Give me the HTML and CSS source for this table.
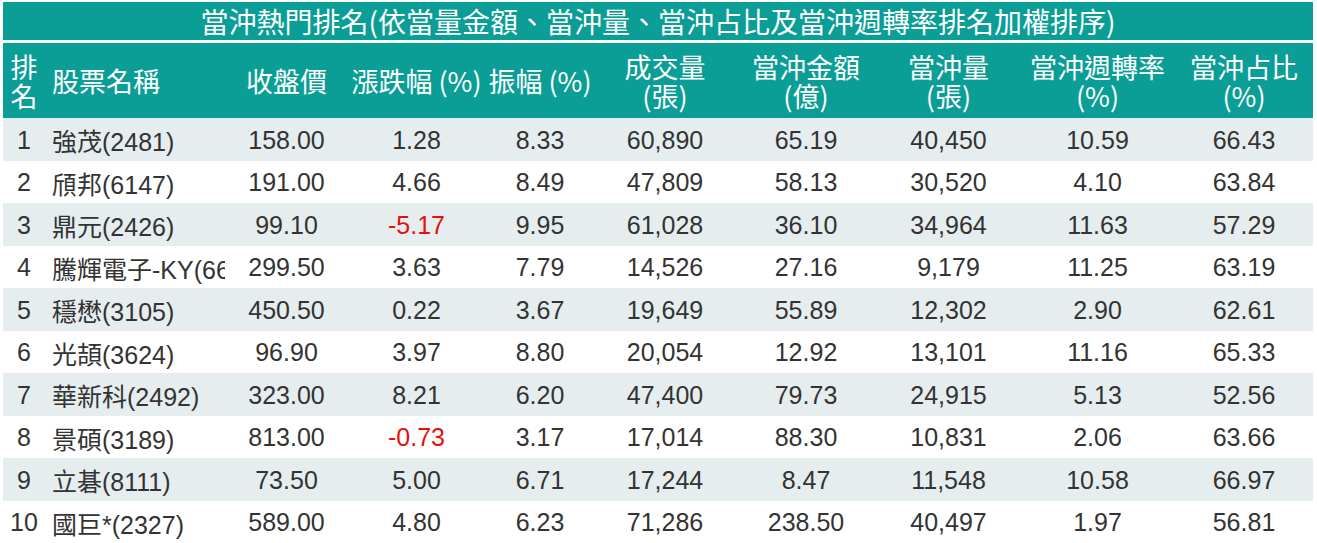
FILE: index.html
```html
<!DOCTYPE html>
<html lang="zh-Hant">
<head>
<meta charset="utf-8">
<title>當沖熱門排名</title>
<link rel="stylesheet" href="styles.css">
</head>
<body>
<div class="board">
  <div class="title">當沖熱門排名(依當量金額、當沖量、當沖占比及當沖週轉率排名加權排序)</div>
  <table class="rank">
    <colgroup>
      <col class="c-rank"><col class="c-name"><col class="c-close"><col class="c-chg"><col class="c-amp"><col class="c-vol"><col class="c-amt"><col class="c-dvol"><col class="c-turn"><col class="c-ratio">
    </colgroup>
    <thead>
      <tr>
        <th>排<br>名</th>
        <th class="left">股票名稱</th>
        <th>收盤價</th>
        <th>漲跌幅 (%)</th>
        <th>振幅 (%)</th>
        <th>成交量<br>(張)</th>
        <th>當沖金額<br>(億)</th>
        <th>當沖量<br>(張)</th>
        <th>當沖週轉率<br>(%)</th>
        <th>當沖占比<br>(%)</th>
      </tr>
    </thead>
    <tbody>
      <tr><td>1</td><td class="left">強茂(2481)</td><td>158.00</td><td>1.28</td><td>8.33</td><td>60,890</td><td>65.19</td><td>40,450</td><td>10.59</td><td>66.43</td></tr>
      <tr><td>2</td><td class="left">頎邦(6147)</td><td>191.00</td><td>4.66</td><td>8.49</td><td>47,809</td><td>58.13</td><td>30,520</td><td>4.10</td><td>63.84</td></tr>
      <tr><td>3</td><td class="left">鼎元(2426)</td><td>99.10</td><td class="neg">-5.17</td><td>9.95</td><td>61,028</td><td>36.10</td><td>34,964</td><td>11.63</td><td>57.29</td></tr>
      <tr><td>4</td><td class="left"><div class="clip">騰輝電子-KY(6672)</div></td><td>299.50</td><td>3.63</td><td>7.79</td><td>14,526</td><td>27.16</td><td>9,179</td><td>11.25</td><td>63.19</td></tr>
      <tr><td>5</td><td class="left">穩懋(3105)</td><td>450.50</td><td>0.22</td><td>3.67</td><td>19,649</td><td>55.89</td><td>12,302</td><td>2.90</td><td>62.61</td></tr>
      <tr><td>6</td><td class="left">光頡(3624)</td><td>96.90</td><td>3.97</td><td>8.80</td><td>20,054</td><td>12.92</td><td>13,101</td><td>11.16</td><td>65.33</td></tr>
      <tr><td>7</td><td class="left">華新科(2492)</td><td>323.00</td><td>8.21</td><td>6.20</td><td>47,400</td><td>79.73</td><td>24,915</td><td>5.13</td><td>52.56</td></tr>
      <tr><td>8</td><td class="left">景碩(3189)</td><td>813.00</td><td class="neg">-0.73</td><td>3.17</td><td>17,014</td><td>88.30</td><td>10,831</td><td>2.06</td><td>63.66</td></tr>
      <tr><td>9</td><td class="left">立碁(8111)</td><td>73.50</td><td>5.00</td><td>6.71</td><td>17,244</td><td>8.47</td><td>11,548</td><td>10.58</td><td>66.97</td></tr>
      <tr><td>10</td><td class="left">國巨*(2327)</td><td>589.00</td><td>4.80</td><td>6.23</td><td>71,286</td><td>238.50</td><td>40,497</td><td>1.97</td><td>56.81</td></tr>
    </tbody>
  </table>
</div>
</body>
</html>
```

FILE: styles.css
```css
html, body {
  margin: 0;
  padding: 0;
  background: #ffffff;
}

.board {
  width: 1310px;
  margin-left: 3px;
  padding-top: 2px;
}

.title {
  height: 38px;
  line-height: 38px;
  background: #0b9e96;
  color: #ffffff;
  text-align: center;
  font-family: "Noto Sans CJK TC", "Noto Sans", sans-serif;
  font-size: 28px;
  white-space: nowrap;
}

.rank {
  width: 1310px;
  margin-top: 3px;
  border-collapse: collapse;
  table-layout: fixed;
}

.c-rank { width: 42px; }
.c-name { width: 180px; }
.c-close { width: 123px; }
.c-chg { width: 137px; }
.c-amp { width: 110px; }
.c-vol { width: 140px; }
.c-amt { width: 142px; }
.c-dvol { width: 143px; }
.c-turn { width: 155px; }
.c-ratio { width: 138px; }

.rank th {
  height: 75px;
  padding: 0;
  background: #0b9e96;
  color: #ffffff;
  font-family: "Noto Sans CJK TC", "Noto Sans", sans-serif;
  font-size: 27px;
  font-weight: normal;
  line-height: 29px;
  text-align: center;
  vertical-align: middle;
  white-space: nowrap;
}

.rank td {
  height: 40.5px;
  padding: 2px 0 0 0;
  color: #333333;
  font-family: "Liberation Sans", "Noto Sans CJK TC", sans-serif;
  font-size: 25px;
  text-align: center;
  vertical-align: middle;
  white-space: nowrap;
  overflow: hidden;
}

.rank tbody tr:nth-child(odd) td {
  background: #e5edef;
}

.rank td.left {
  text-align: left;
  padding-left: 7px;
}

.rank th.left {
  text-align: left;
  padding-left: 7px;
}

.clip {
  overflow: hidden;
  white-space: nowrap;
}

.rank td.neg {
  color: #e3120b;
}
```
